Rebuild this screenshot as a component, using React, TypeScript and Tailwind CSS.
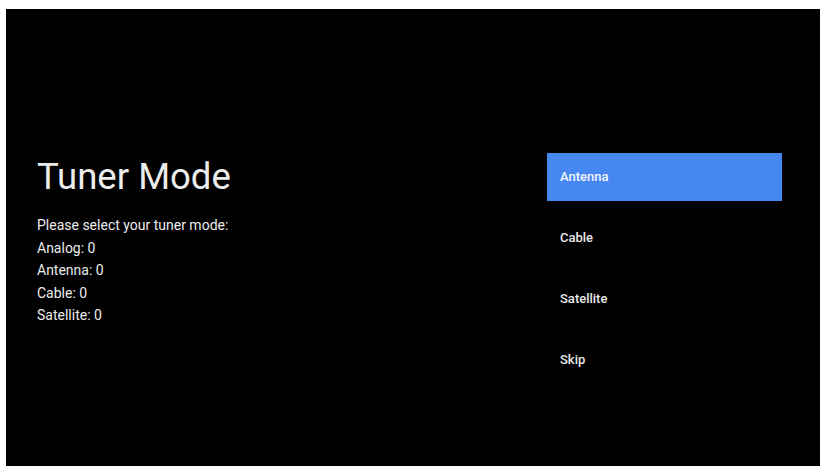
const options = ["Antenna", "Cable", "Satellite", "Skip"];

const counts = [
  { label: "Analog", value: 0 },
  { label: "Antenna", value: 0 },
  { label: "Cable", value: 0 },
  { label: "Satellite", value: 0 },
];

export default function App() {
  const selected = 0;

  return (
    <div className="h-[467px] w-[823px] bg-white pt-[9px] pl-[6px] pr-[3px] pb-[1px] font-['Roboto',sans-serif]">
      <div className="flex h-full w-full bg-black">
        {/* info colona */}
        <div className="w-[510px] pl-[31px] pt-[150px] text-[#ececec]">
          <h1 className="text-[36.5px] leading-[36px] font-normal">Tuner Mode</h1>
          <div className="mt-[19px] text-[14px] leading-[22.5px]">
            <p>Please select your tuner mode:</p>
            {counts.map(c => (
              <p key={c.label}>
                {c.label}: {c.value}
              </p>
            ))}
          </div>
        </div>

        {/* lista opcija */}
        <div className="flex w-[235px] flex-col gap-[13px] pt-[144px] ml-[31px]">
          {options.map((opt, i) => (
            <div
              key={opt}
              className={
                i === selected
                  ? "flex h-[48px] items-center bg-[#4687f1] px-[13px] text-[13px] font-medium text-[#f2f6ff]"
                  : "flex h-[48px] items-center px-[13px] text-[13px] font-medium text-[#e8e8e8]"
              }
            >
              {opt}
            </div>
          ))}
        </div>
      </div>
    </div>
  );
}
